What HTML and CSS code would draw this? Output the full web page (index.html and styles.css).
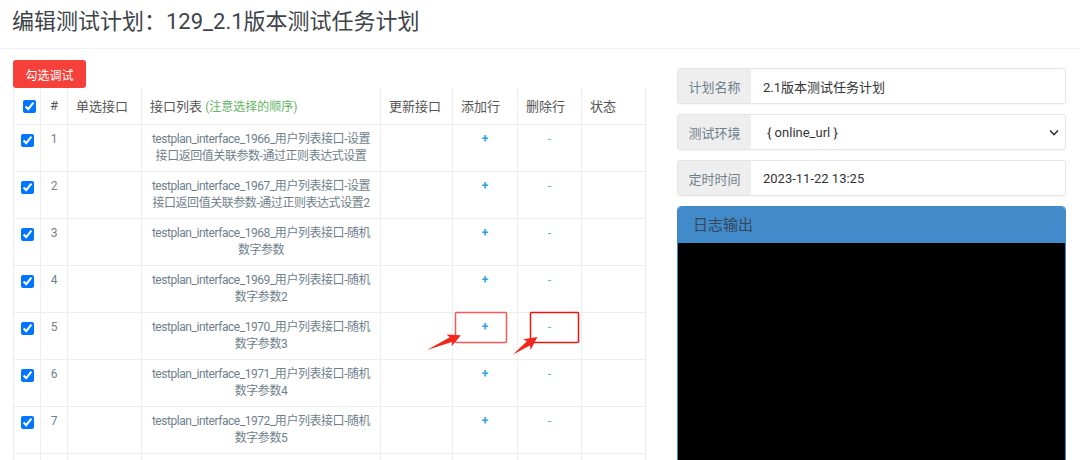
FILE: index.html
```html
<!DOCTYPE html>
<html lang="zh-CN">
<head>
    <meta charset="UTF-8">
    <title>编辑测试计划</title>
    <link rel="stylesheet" href="styles.css">
</head>
<body>
    <div class="page-title">编辑测试计划：129_2.1版本测试任务计划</div>

    <div class="main">
        <div class="left-col">
            <button class="btn-debug">勾选调试</button>
            <table class="case-table">
                <thead>
                    <tr>
                        <th class="c-check"><input type="checkbox" checked></th>
                        <th class="c-num">#</th>
                        <th class="c-radio">单选接口</th>
                        <th class="c-name">接口列表 <span class="hint">(注意选择的顺序)</span></th>
                        <th class="c-update">更新接口</th>
                        <th class="c-add">添加行</th>
                        <th class="c-del">删除行</th>
                        <th class="c-status">状态</th>
                    </tr>
                </thead>
                <tbody>
                    <tr>
                        <td class="center"><input type="checkbox" checked></td>
                        <td class="center">1</td>
                        <td></td>
                        <td class="center name">testplan_interface_1966_用户列表接口-设置<br>接口返回值关联参数-通过正则表达式设置</td>
                        <td></td>
                        <td class="center op add">+</td>
                        <td class="center op">-</td>
                        <td></td>
                    </tr>
                    <tr>
                        <td class="center"><input type="checkbox" checked></td>
                        <td class="center">2</td>
                        <td></td>
                        <td class="center name">testplan_interface_1967_用户列表接口-设置<br>接口返回值关联参数-通过正则表达式设置2</td>
                        <td></td>
                        <td class="center op add">+</td>
                        <td class="center op">-</td>
                        <td></td>
                    </tr>
                    <tr>
                        <td class="center"><input type="checkbox" checked></td>
                        <td class="center">3</td>
                        <td></td>
                        <td class="center name">testplan_interface_1968_用户列表接口-随机<br>数字参数</td>
                        <td></td>
                        <td class="center op add">+</td>
                        <td class="center op">-</td>
                        <td></td>
                    </tr>
                    <tr>
                        <td class="center"><input type="checkbox" checked></td>
                        <td class="center">4</td>
                        <td></td>
                        <td class="center name">testplan_interface_1969_用户列表接口-随机<br>数字参数2</td>
                        <td></td>
                        <td class="center op add">+</td>
                        <td class="center op">-</td>
                        <td></td>
                    </tr>
                    <tr>
                        <td class="center"><input type="checkbox" checked></td>
                        <td class="center">5</td>
                        <td></td>
                        <td class="center name">testplan_interface_1970_用户列表接口-随机<br>数字参数3</td>
                        <td></td>
                        <td class="center op add">+</td>
                        <td class="center op">-</td>
                        <td></td>
                    </tr>
                    <tr>
                        <td class="center"><input type="checkbox" checked></td>
                        <td class="center">6</td>
                        <td></td>
                        <td class="center name">testplan_interface_1971_用户列表接口-随机<br>数字参数4</td>
                        <td></td>
                        <td class="center op add">+</td>
                        <td class="center op">-</td>
                        <td></td>
                    </tr>
                    <tr>
                        <td class="center"><input type="checkbox" checked></td>
                        <td class="center">7</td>
                        <td></td>
                        <td class="center name">testplan_interface_1972_用户列表接口-随机<br>数字参数5</td>
                        <td></td>
                        <td class="center op add">+</td>
                        <td class="center op">-</td>
                        <td></td>
                    </tr>
                    <tr class="row-tail">
                        <td></td>
                        <td></td>
                        <td></td>
                        <td></td>
                        <td></td>
                        <td></td>
                        <td></td>
                        <td></td>
                    </tr>
                </tbody>
            </table>
        </div>

        <div class="right-col">
            <div class="input-group">
                <span class="addon">计划名称</span>
                <div class="field">2.1版本测试任务计划</div>
            </div>
            <div class="input-group">
                <span class="addon">测试环境</span>
                <div class="field select">
                    <span class="select-text">{ online_url }</span>
                    <svg class="chevron" width="10" height="7" viewBox="0 0 10 7">
                        <path d="M1 1.5 L5 5.5 L9 1.5" fill="none" stroke="#343a40" stroke-width="1.6"/>
                    </svg>
                </div>
            </div>
            <div class="input-group">
                <span class="addon">定时时间</span>
                <div class="field">2023-11-22 13:25</div>
            </div>

            <div class="log-panel">
                <div class="log-head">日志输出</div>
                <div class="log-body"></div>
            </div>
        </div>
    </div>

    <!-- annotation marks drawn over the screenshot -->
    <svg class="marks" width="1080" height="460" viewBox="0 0 1080 460">
        <rect x="455.5" y="312.5" width="51" height="30" rx="1" fill="none" stroke="#f45a55" stroke-width="1.5"/>
        <rect x="530.5" y="312.5" width="48" height="30" rx="1" fill="none" stroke="#e8160f" stroke-width="1.5"/>
        <g transform="translate(427 350) rotate(-23.6)">
            <polygon points="0,0 26,-2.6 24,-6.5 37,0 24,6.5 26,2.6" fill="#f2261c"/>
        </g>
        <g transform="translate(513 354.5) rotate(-35.6)">
            <polygon points="0,0 19,-2.6 17,-6.5 30,0 17,6.5 19,2.6" fill="#f2261c"/>
        </g>
    </svg>
</body>
</html>
```

FILE: styles.css
```css
* {
    margin: 0;
    padding: 0;
    box-sizing: border-box;
}

body {
    position: relative;
    width: 1080px;
    height: 460px;
    overflow: hidden;
    background-color: #ffffff;
    font-family: Roboto, "Noto Sans CJK SC", sans-serif;
    color: #333333;
}

.page-title {
    height: 49px;
    padding: 7px 0 0 12px;
    font-size: 22px;
    line-height: 30px;
    color: #3d4348;
    border-bottom: 1px solid #f1f1f1;
}

.main {
    display: flex;
    padding: 11px 0 0 13px;
}

.left-col {
    width: 632px;
}

.btn-debug {
    display: block;
    width: 73px;
    height: 28px;
    background-color: #f5413a;
    border: none;
    border-radius: 3px;
    color: #ffffff;
    font-family: Roboto, "Noto Sans CJK SC", sans-serif;
    font-size: 12px;
}

.case-table {
    width: 632px;
    border-collapse: collapse;
    table-layout: fixed;
    font-size: 12px;
    color: #6f7f8b;
}

.case-table th,
.case-table td {
    border: 1px solid #eeeeee;
}

.case-table th {
    height: 36px;
    padding: 0 8px;
    text-align: left;
    font-weight: 400;
    font-size: 13px;
    color: #555555;
    border-top: none;
}

.case-table td {
    height: 47px;
    padding: 6px 2px;
    line-height: 17px;
    vertical-align: top;
}

.case-table .row-tail td {
    height: 20px;
}

.name {
    white-space: nowrap;
    letter-spacing: -0.45px;
}

.case-table input[type="checkbox"] {
    width: 13px;
    height: 13px;
    margin: 3px 0 0 1px;
    vertical-align: top;
}

.case-table th input[type="checkbox"] {
    margin-top: 2px;
}

.c-check { width: 27px; }
.c-num { width: 27px; }
.c-radio { width: 74px; }
.c-name { width: 239px; }
.c-update { width: 72px; }
.c-add { width: 65px; }
.c-del { width: 64px; }
.c-status { width: 64px; }

.case-table th.c-num {
    padding-left: 9px;
}

.hint {
    font-size: 12px;
    color: #62b462;
}

.center {
    text-align: center;
}

.op {
    color: #45b0e6;
}

.op.add {
    color: #2ba5e2;
    font-weight: 700;
}

.right-col {
    width: 389px;
    margin: 8px 0 0 32px;
    display: flex;
    flex-direction: column;
    gap: 10px;
}

.input-group {
    display: flex;
    height: 36px;
    border: 1px solid #e4e4e4;
    border-radius: 3px;
    box-shadow: 0 1px 1px rgba(0, 0, 0, 0.04);
    overflow: hidden;
}

.addon {
    width: 73px;
    display: flex;
    align-items: center;
    justify-content: center;
    background-color: #eeeeee;
    font-size: 13px;
    color: #6f7f8b;
}

.field {
    flex: 1;
    display: flex;
    align-items: center;
    padding: 0 12px;
    font-size: 13px;
    color: #333333;
}

.select {
    justify-content: space-between;
    padding: 0 6px 0 16px;
}

.chevron {
    display: block;
}

.log-panel {
    border: 1px solid #428bca;
    border-radius: 4px 4px 0 0;
    overflow: hidden;
}

.log-head {
    height: 36px;
    padding: 0 15px;
    background-color: #428bca;
    font-size: 15px;
    line-height: 36px;
    color: #364656;
}

.log-body {
    height: 400px;
    background-color: #000000;
}

.marks {
    position: absolute;
    top: 0;
    left: 0;
    pointer-events: none;
}
```
